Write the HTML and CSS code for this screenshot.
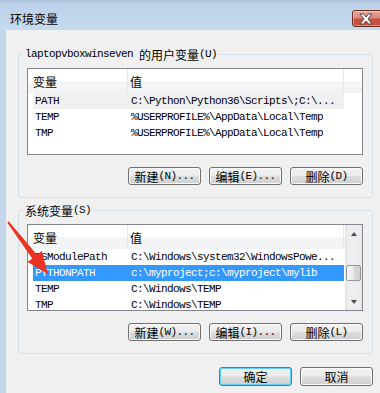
FILE: index.html
```html
<!DOCTYPE html>
<html lang="zh-CN">

<head>
    <meta charset="UTF-8">
    <meta name="viewport" content="width=device-width, initial-scale=1.0">
    <title>环境变量</title>
    <link rel="stylesheet" href="styles.css">
</head>

<body>
    <div class="titlebar">
        <span class="title">环境变量</span>
        <div class="close">
            <svg width="16" height="12" viewBox="0 0 16 12">
                <path d="M2 1 H5.5 L8 4 L10.5 1 H14 L10 6 L14 11 H10.5 L8 8 L5.5 11 H2 L6 6 Z" fill="#fff" stroke="#4a4a4a" stroke-width="1" stroke-linejoin="round" />
            </svg>
        </div>
    </div>

    <div class="client">
        <fieldset class="group">
            <legend>laptopvboxwinseven <span class="zh">的用户变量</span>(U)</legend>
            <div class="listview">
                <div class="lv-main">
                    <div class="lv-header">
                        <span class="hd-name zh">变量</span>
                        <span class="hd-value zh">值</span>
                        <span class="hd-fill"></span>
                    </div>
                    <div class="lv-row dim">
                        <span class="cell-name">PATH</span>
                        <span class="cell-value">C:\Python\Python36\Scripts\;C:\...</span>
                    </div>
                    <div class="lv-row">
                        <span class="cell-name">TEMP</span>
                        <span class="cell-value">%USERPROFILE%\AppData\Local\Temp</span>
                    </div>
                    <div class="lv-row">
                        <span class="cell-name">TMP</span>
                        <span class="cell-value">%USERPROFILE%\AppData\Local\Temp</span>
                    </div>
                </div>
            </div>
            <div class="btn-row">
                <button class="btn"><span class="zh">新建</span>(N)...</button>
                <button class="btn"><span class="zh">编辑</span>(E)...</button>
                <button class="btn"><span class="zh">删除</span>(D)</button>
            </div>
        </fieldset>

        <fieldset class="group">
            <legend><span class="zh">系统变量</span>(S)</legend>
            <div class="listview">
                <div class="lv-main">
                    <div class="lv-header">
                        <span class="hd-name zh">变量</span>
                        <span class="hd-value zh">值</span>
                    </div>
                    <div class="lv-row">
                        <span class="cell-name">PSModulePath</span>
                        <span class="cell-value">C:\Windows\system32\WindowsPowe...</span>
                    </div>
                    <div class="lv-row selected">
                        <span class="cell-name">PYTHONPATH</span>
                        <span class="cell-value">c:\myproject;c:\myproject\mylib</span>
                    </div>
                    <div class="lv-row">
                        <span class="cell-name">TEMP</span>
                        <span class="cell-value">C:\Windows\TEMP</span>
                    </div>
                    <div class="lv-row">
                        <span class="cell-name">TMP</span>
                        <span class="cell-value">C:\Windows\TEMP</span>
                    </div>
                </div>
                <div class="scrollbar">
                    <div class="sb-btn"><span class="tri-up"></span></div>
                    <div class="sb-thumb"></div>
                    <div class="sb-space"></div>
                    <div class="sb-btn"><span class="tri-down"></span></div>
                </div>
            </div>
            <div class="btn-row">
                <button class="btn"><span class="zh">新建</span>(W)...</button>
                <button class="btn"><span class="zh">编辑</span>(I)...</button>
                <button class="btn"><span class="zh">删除</span>(L)</button>
            </div>
        </fieldset>

        <div class="dialog-buttons">
            <button class="btn btn-default"><span class="zh">确定</span></button>
            <button class="btn"><span class="zh">取消</span></button>
        </div>
    </div>

    <!-- red pointer drawn over the list -->
    <svg class="pointer" width="60" height="75" viewBox="0 0 60 75">
        <polygon points="8.8,11.4 37,44.8 41.7,41.1 48,64 27.5,52.1 32.2,48.4 7.2,12.6" fill="#ea3323" />
    </svg>
</body>

</html>
```

FILE: styles.css
```css
body {
    margin: 0;
    width: 380px;
    height: 393px;
    overflow: hidden;
    position: relative;
    background: #c3d7ec;
    font-family: "Liberation Mono", "Noto Sans CJK SC", monospace;
    font-size: 11px;
    letter-spacing: -0.6px;
    color: #000;
}

.zh {
    font-family: "Noto Sans CJK SC", sans-serif;
    font-size: 12px;
    letter-spacing: 0;
}

/* title bar */
.titlebar {
    height: 30px;
    display: flex;
    align-items: flex-start;
    justify-content: space-between;
    background: linear-gradient(#abc1d9, #bdd2e9 15%, #c6daee);
}

.title {
    font-family: "Noto Sans CJK SC", sans-serif;
    font-size: 12px;
    letter-spacing: 0;
    line-height: 16px;
    padding: 11px 0 0 10px;
}

.close {
    flex-shrink: 0;
    margin-top: 10px;
    margin-right: -15px;
    width: 43px;
    height: 17px;
    box-sizing: border-box;
    border: 1px solid #6b2a22;
    border-radius: 3px;
    background: linear-gradient(#e8a99d, #d98a7c 45%, #c74f40 55%, #c9503e);
    box-shadow: inset 0 0 0 1px rgba(255, 255, 255, 0.35);
    display: flex;
    align-items: center;
    padding-left: 5px;
}

/* client area */
.client {
    margin-left: 6px;
    height: 363px;
    padding-top: 17px;
    box-sizing: border-box;
    background: #f0f0f0;
}

.group {
    margin: 0 0 0 12px;
    width: 355px;
    box-sizing: border-box;
    border: 1px solid #d5dfe5;
    border-radius: 3px;
    padding: 7px 9px 12px 8px;
    min-width: 0;
}

.group + .group {
    margin-top: 5px;
}

legend {
    display: flex;
    align-items: center;
    height: 14px;
    padding: 0 2px;
    margin-left: -4px;
    white-space: pre;
}

/* list view */
.listview {
    display: flex;
    height: 87px;
    box-sizing: border-box;
    border: 1px solid #828790;
    background: #fff;
    overflow: hidden;
}

.lv-main {
    flex: 1;
    min-width: 0;
}

.lv-header {
    display: flex;
    height: 24px;
    background: linear-gradient(#fff 0, #fff 48%, #f5f6f8 52%, #f1f2f4 100%);
}

.lv-header span {
    display: flex;
    align-items: center;
    box-sizing: border-box;
    border-right: 1px solid #e3e8ee;
}

.hd-name {
    width: 100px;
    padding-left: 5px;
}

.hd-value {
    width: 216px;
    padding-left: 2px;
}

.hd-fill {
    flex: 1;
    border-right: none !important;
}

.lv-row {
    display: flex;
    height: 16px;
    line-height: 16px;
    width: 311px;
    margin-left: 5px;
    white-space: pre;
}

.lv-row.dim {
    background: #f0f0f0;
}

.lv-row.selected {
    background: #3399ff;
    color: #fff;
}

.cell-name {
    width: 98px;
    padding-left: 2px;
    box-sizing: border-box;
}

.cell-value {
    flex: 1;
    overflow: hidden;
}

/* scroll bar */
.scrollbar {
    width: 17px;
    display: flex;
    flex-direction: column;
    align-items: center;
    background: linear-gradient(90deg, #e2e3e4, #eeeef0 20%, #eeeef0 80%, #e6e6e8);
}

.sb-btn {
    height: 17px;
    width: 17px;
    display: flex;
    align-items: center;
    justify-content: center;
}

.tri-up,
.tri-down {
    width: 0;
    height: 0;
    border-left: 3.5px solid transparent;
    border-right: 3.5px solid transparent;
}

.tri-up {
    border-bottom: 4px solid #4d4d4d;
}

.tri-down {
    border-top: 4px solid #4d4d4d;
}

.sb-thumb {
    margin-top: 23px;
    width: 15px;
    height: 16px;
    box-sizing: border-box;
    border: 1px solid #979797;
    border-radius: 2px;
    background: linear-gradient(90deg, #f5f5f5, #e9e9eb 50%, #d9dadc 52%, #cfd0d2);
}

.sb-space {
    flex: 1;
}

/* buttons */
.btn-row {
    display: flex;
    justify-content: flex-end;
    gap: 8px;
    margin-top: 12px;
}

.btn {
    width: 73px;
    height: 18px;
    padding: 0;
    margin: 0;
    display: flex;
    align-items: center;
    justify-content: center;
    box-sizing: border-box;
    border: 1px solid #707070;
    border-radius: 3px;
    background: linear-gradient(#f2f2f2, #ebebeb 48%, #dddddd 52%, #cfcfcf);
    box-shadow: inset 0 0 0 1px #fbfbfb;
    font-family: "Liberation Mono", "Noto Sans CJK SC", monospace;
    font-size: 11px;
    letter-spacing: -0.6px;
    color: #000;
    white-space: pre;
}

.dialog-buttons {
    display: flex;
    justify-content: flex-end;
    gap: 8px;
    margin: 13px 7px 0 0;
}

.dialog-buttons .btn {
    height: 19px;
}

.btn-default {
    border-color: #3c7fb1;
    box-shadow: inset 0 0 0 1px #5fd0f7;
}

/* annotation arrow */
.pointer {
    position: absolute;
    left: 0;
    top: 210px;
}
```
